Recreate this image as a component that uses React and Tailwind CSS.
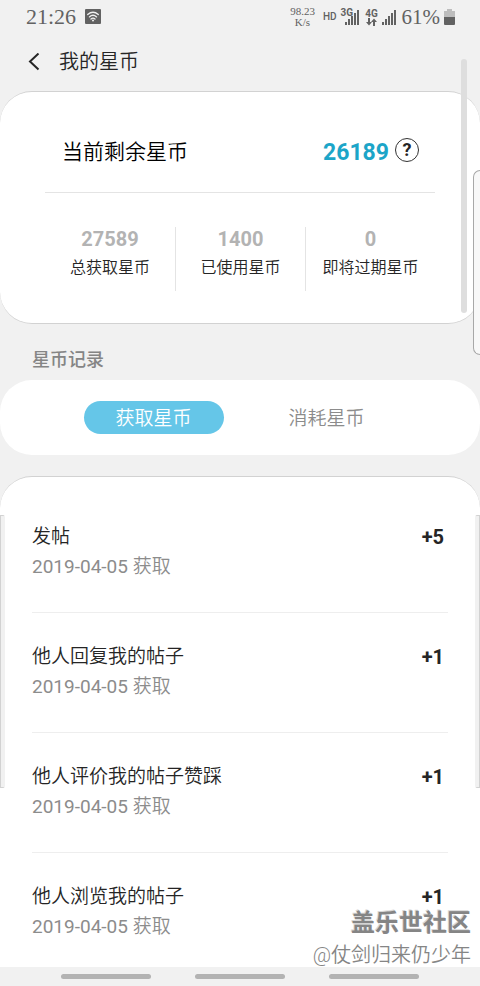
import React, { useState } from "react";

const stats = [
  { value: "27589", label: "总获取星币" },
  { value: "1400", label: "已使用星币" },
  { value: "0", label: "即将过期星币" },
];

const records = [
  { title: "发帖", date: "2019-04-05", action: "获取", points: "+5" },
  { title: "他人回复我的帖子", date: "2019-04-05", action: "获取", points: "+1" },
  { title: "他人评价我的帖子赞踩", date: "2019-04-05", action: "获取", points: "+1" },
  { title: "他人浏览我的帖子", date: "2019-04-05", action: "获取", points: "+1" },
];

function SignalBars({ className }) {
  return (
    <svg className={className} width="15" height="15" viewBox="0 0 15 15" fill="currentColor" aria-hidden="true">
      <rect x="0" y="12" width="2" height="3" />
      <rect x="3" y="9" width="2" height="6" />
      <rect x="6" y="6" width="2" height="9" />
      <rect x="9" y="3" width="2" height="12" />
      <rect x="12" y="0" width="2" height="15" />
    </svg>
  );
}

function StatusBar() {
  return (
    <div className="flex h-[34px] items-center justify-between pr-[25px] pl-[26px] text-[#626262]">
      <div className="flex items-center gap-[9px]">
        <span className="font-['Liberation_Serif',serif] text-[22px] leading-6">21:26</span>
        <svg className="mb-[2px]" width="16" height="15" viewBox="0 0 16 15" aria-hidden="true">
          <rect width="16" height="15" rx="1" fill="#626262" />
          <g fill="none" stroke="#f1f1f1" strokeWidth="1.3" strokeLinecap="round">
            <path d="M2.7 5.6Q8 1 13.3 5.6" />
            <path d="M4.4 7.9Q8 4.7 11.6 7.9" />
            <path d="M6 10Q8 8.2 10 10" />
          </g>
          <circle cx="8" cy="11.4" r="1" fill="#f1f1f1" />
        </svg>
      </div>
      <div className="flex items-center">
        <span className="flex flex-col items-center font-['Liberation_Serif',serif] text-[11px] leading-[11px]">
          <span>98.23</span>
          <span>K/s</span>
        </span>
        <span className="ml-2 font-[Roboto,sans-serif] text-[10px] leading-3 font-medium">HD</span>
        <span className="relative ml-1 flex h-4 w-[19px] items-end justify-end">
          <span className="absolute top-[-1px] left-0 z-10 font-[Roboto,sans-serif] text-[10px] leading-[10px] font-bold">3G</span>
          <SignalBars />
        </span>
        <span className="ml-[6px] flex w-3 flex-col items-center">
          <span className="font-[Roboto,sans-serif] text-[10px] leading-[9px] font-bold">4G</span>
          <svg width="11" height="8" viewBox="0 0 11 8" fill="currentColor" aria-hidden="true">
            <path d="M2 0h2v4h2L3 7.5 0 4h2zM7 8h2V4h2L8 .5 5 4h2z" />
          </svg>
        </span>
        <SignalBars className="ml-1" />
        <span className="ml-[5px] font-['Liberation_Serif',serif] text-[21px] leading-6">61%</span>
        <svg className="ml-1" width="11" height="16" viewBox="0 0 11 16" aria-hidden="true">
          <path d="M3 0h5v2h3v6H0V2h3z" fill="#bdbdbd" />
          <path d="M0 8h11v7q0 1-1 1H1q-1 0-1-1z" fill="#626262" />
        </svg>
      </div>
    </div>
  );
}

function Balance() {
  return (
    <section className="rounded-[32px] border-y border-[#d2d2d2] bg-white px-[45px] pt-[18px] pb-8">
      <div className="flex h-[83px] items-center justify-between border-b border-[#e4e4e4] pr-4 pl-[17px]">
        <h2 className="pt-[2px] text-[21px] leading-8 font-[350] text-black">当前剩余星币</h2>
        <div className="flex items-center gap-[6px]">
          <span className="pt-1 text-[23px] leading-8 font-bold text-[#1ca5c8]">26189</span>
          <button
            type="button"
            aria-label="星币说明"
            className="mb-[2px] flex size-6 items-center justify-center rounded-full border border-[#333333] text-[18px] leading-5 font-bold text-[#252525]"
          >
            ?
          </button>
        </div>
      </div>
      <dl className="mt-[34px] grid grid-cols-3">
        {stats.map((s) => (
          <div key={s.label} className="flex h-16 flex-col-reverse justify-end border-l border-[#e4e4e4] text-center first:border-l-0">
            <dt className="text-[16px] leading-[34px] font-[350] whitespace-nowrap text-[#252525]">{s.label}</dt>
            <dd className="text-[20px] leading-6 font-bold text-[#b3b3b3]">{s.value}</dd>
          </div>
        ))}
      </dl>
    </section>
  );
}

export default function App() {
  const [tab, setTab] = useState("earned");
  const active = "bg-[#65c6e8] text-white";
  const idle = "text-[#8c8c8c]";

  return (
    <div className="relative flex min-h-screen flex-col overflow-hidden bg-[#f1f1f1] font-[Roboto,'Noto_Sans_CJK_SC',sans-serif] text-[#252525]">
      <StatusBar />
      <header className="flex h-[57px] items-center gap-[19px] pb-[2px] pl-7">
        <button type="button" aria-label="返回">
          <svg width="12" height="18" viewBox="0 0 12 18" fill="none" stroke="#252525" strokeWidth="2" aria-hidden="true">
            <path d="M10.500 .5 2 8.500l8.500 8" />
          </svg>
        </button>
        <h1 className="text-[20px] leading-8 font-[350]">我的星币</h1>
      </header>

      <Balance />

      <h2 className="px-8 pt-5 pb-1 text-[18px] leading-8 font-medium text-[#858585]">星币记录</h2>

      <div className="flex justify-center gap-[33px] rounded-[32px] bg-white py-[21px] text-[19px] leading-[35px] font-[350]">
        <button type="button" onClick={() => setTab("earned")} className={`h-[33px] w-[140px] rounded-full ${tab === "earned" ? active : idle}`}>
          获取星币
        </button>
        <button type="button" onClick={() => setTab("spent")} className={`h-[33px] w-[140px] rounded-full ${tab === "spent" ? active : idle}`}>
          消耗星币
        </button>
      </div>

      <ul className="mt-[21px] flex-1 rounded-t-[32px] border-t border-[#d2d2d2] bg-white px-8 pt-4">
        {records.map((r) => (
          <li key={r.title} className="flex justify-between border-b border-[#eeeeee] pt-[29px] pr-1 pb-[30px] last:border-b-0 last:pb-[25px]">
            <div className="text-[19px] leading-[30px]">
              <p className="font-[350]">{r.title}</p>
              <p className="text-[#8c8c8c]">
                {r.date} <span className="font-[350]">{r.action}</span>
              </p>
            </div>
            <span className="text-[20px] leading-[30px] font-bold">{r.points}</span>
          </li>
        ))}
      </ul>

      <footer className="flex h-[19px] items-center justify-center gap-11 bg-[#f1f1f1]">
        <span className="h-[5px] w-[90px] rounded-full bg-[#b3b3b3]" />
        <span className="h-[5px] w-[90px] rounded-full bg-[#b3b3b3]" />
        <span className="h-[5px] w-[90px] rounded-full bg-[#b3b3b3]" />
      </footer>

      {/* Scroll thumb, edge-panel handle and page-edge guides */}
      <div className="absolute top-[59px] right-[13px] h-[254px] w-[6px] rounded-full bg-[#dedede]" />
      <div className="absolute top-[170px] right-0 h-[185px] w-[7px] rounded-l-[7px] border border-r-0 border-[#a8a8a8] bg-[#f8f8f8]" />
      <div className="absolute top-[515px] left-0 h-[273px] w-[5px] rounded-r-[2px] border border-[#d2d2d2] border-r-[#f1f1f1] bg-[#f1f1f1]" />
      <div className="absolute top-[515px] right-0 h-[273px] w-[5px] rounded-l-[2px] border border-[#d2d2d2] border-l-[#f1f1f1] bg-[#f1f1f1]" />

      {/* Community watermark */}
      <div className="absolute right-[9px] bottom-[15px] flex flex-col items-end text-right whitespace-nowrap">
        <span className="text-[24px] leading-8 font-bold text-[#858585] [text-shadow:-1px_-1px_0_#d8d8d8]">盖乐世社区</span>
        <span className="text-[20px] leading-8 font-[350] text-[#858585]">@仗剑归来仍少年</span>
      </div>
    </div>
  );
}
